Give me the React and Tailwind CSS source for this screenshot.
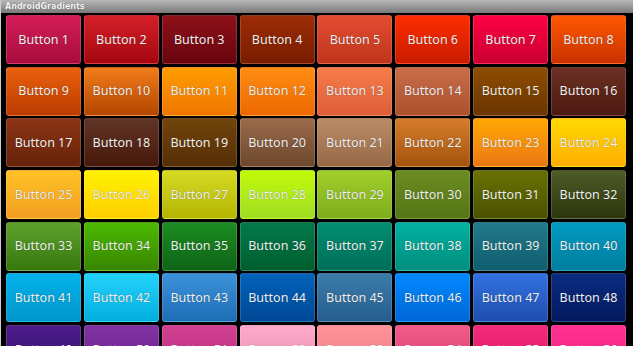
import React from "react";

const buttons = [
  "from-[#d41d58] to-[#a80c3e]",
  "from-[#d41f28] to-[#a5060f]",
  "from-[#8e1119] to-[#68050f]",
  "from-[#9c2c07] to-[#781d00]",
  "from-[#e44c31] to-[#bf351c]",
  "from-[#ff2c00] to-[#c91c00]",
  "from-[#ff0244] to-[#c9002f]",
  "from-[#ff5700] to-[#c93200]",

  "from-[#ea600e] to-[#bb3b00]",
  "from-[#f27c1a] to-[#b34600]",
  "from-[#ff9c00] to-[#ef7600]",
  "from-[#ff8c12] to-[#ec6800]",
  "from-[#f67c4a] to-[#dd5d38]",
  "from-[#c86c4a] to-[#ad502c]",
  "from-[#8e4c02] to-[#6b3600]",
  "from-[#6c3024] to-[#4e1a10]",

  "from-[#8c3414] to-[#67230a]",
  "from-[#603426] to-[#47190a]",
  "from-[#72440c] to-[#552f06]",
  "from-[#9c6a4a] to-[#6c482e]",
  "from-[#ba8c66] to-[#976846]",
  "from-[#d47c2a] to-[#a5540e]",
  "from-[#ffa702] to-[#eb7812]",
  "from-[#ffd802] to-[#ffae00]",

  "from-[#ffc224] to-[#f29e22]",
  "from-[#fff202] to-[#ffcf00]",
  "from-[#d6da22] to-[#b5b500]",
  "from-[#c2fa02] to-[#9edd22]",
  "from-[#a2ce2a] to-[#7dad1e]",
  "from-[#6c8c22] to-[#557716]",
  "from-[#687202] to-[#4a5200]",
  "from-[#4e5c26] to-[#2c360e]",

  "from-[#5ca22c] to-[#38780e]",
  "from-[#4cba02] to-[#388600]",
  "from-[#1c8c22] to-[#0f6416]",
  "from-[#027a4c] to-[#005e2e]",
  "from-[#028e72] to-[#006e58]",
  "from-[#02b2a2] to-[#008e7e]",
  "from-[#227a8a] to-[#0e5e6e]",
  "from-[#029ac2] to-[#007e9e]",

  "from-[#02b2ea] to-[#0096ca]",
  "from-[#22d2fa] to-[#00aede]",
  "from-[#3c92da] to-[#1e6eb6]",
  "from-[#0262ba] to-[#004896]",
  "from-[#3c7caa] to-[#265e8e]",
  "from-[#028aff] to-[#0066d6]",
  "from-[#3272e2] to-[#1e4eae]",
  "from-[#0c2c82] to-[#03195e]",

  "from-[#4c1c8a] to-[#380f6e]",
  "from-[#8232a2] to-[#68208e]",
  "from-[#d24292] to-[#b6277e]",
  "from-[#ffaaca] to-[#e68eae]",
  "from-[#ff929a] to-[#ee7e86]",
  "from-[#f25a8a] to-[#d63f6e]",
  "from-[#f22a7a] to-[#de1766]",
  "from-[#ff3292] to-[#ee1f7e]",
];

const GradientButton = ({ label, colors }) => (
  <div
    className={`flex items-center justify-center rounded-[3px] border border-white/15 bg-linear-to-b ${colors} pt-[1px] text-[12.5px] text-[#f0f0f0] [font-family:'Noto_Sans','Open_Sans',sans-serif] [text-shadow:0_0_1px_rgba(0,0,0,0.4)]`}
  >
    {label}
  </div>
);

export default function App() {
  return (
    <div className="flex h-[346px] w-[633px] flex-col overflow-hidden border-l border-[#cfcfcf] bg-black">
      {/* Title bar */}
      <div className="flex h-[13px] shrink-0 items-center bg-linear-to-b from-[#b8b8b8] to-[#7a7a7a] pl-[4px] text-[8px] font-bold leading-none text-[#f4f4f4] [font-family:'DejaVu_Sans',sans-serif] [text-shadow:0_0_1px_rgba(0,0,0,0.5)]">
        AndroidGradients
      </div>

      {/* Button grid */}
      <div className="pl-[5px] pt-[2px]">
        <div className="grid w-[620px] grid-cols-8 auto-rows-[49px] gap-[2.7px]">
          {buttons.map((colors, i) => (
            <GradientButton key={i} label={`Button ${i + 1}`} colors={colors} />
          ))}
        </div>
      </div>
    </div>
  );
}
